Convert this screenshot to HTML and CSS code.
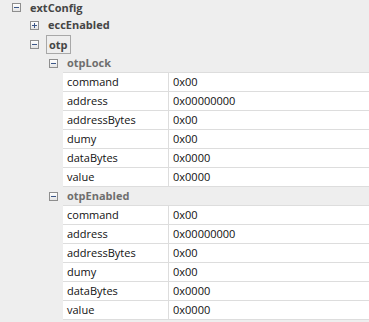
FILE: index.html
```html
<!DOCTYPE html>
<html lang="en">
  <head>
    <meta charset="UTF-8" />
    <title>extConfig</title>
    <link rel="stylesheet" href="styles.css">
  </head>

  <body>
    <div class="tree">
      <div class="node lvl0 first">
        <span class="toggle minus"></span>
        <span class="label">extConfig</span>
      </div>
      <div class="node lvl1">
        <span class="toggle plus"></span>
        <span class="label">eccEnabled</span>
      </div>
      <div class="node lvl1">
        <span class="toggle minus"></span>
        <span class="label focus">otp</span>
      </div>

      <div class="node lvl2 group">
        <span class="toggle minus"></span>
        <span class="label">otpLock</span>
      </div>
      <div class="props">
        <div class="row"><span class="name">command</span><span class="val">0x00</span></div>
        <div class="row"><span class="name">address</span><span class="val">0x00000000</span></div>
        <div class="row"><span class="name">addressBytes</span><span class="val">0x00</span></div>
        <div class="row"><span class="name">dumy</span><span class="val">0x00</span></div>
        <div class="row"><span class="name">dataBytes</span><span class="val">0x0000</span></div>
        <div class="row"><span class="name">value</span><span class="val">0x0000</span></div>
      </div>

      <div class="node lvl2 group">
        <span class="toggle minus"></span>
        <span class="label">otpEnabled</span>
      </div>
      <div class="props">
        <div class="row"><span class="name">command</span><span class="val">0x00</span></div>
        <div class="row"><span class="name">address</span><span class="val">0x00000000</span></div>
        <div class="row"><span class="name">addressBytes</span><span class="val">0x00</span></div>
        <div class="row"><span class="name">dumy</span><span class="val">0x00</span></div>
        <div class="row"><span class="name">dataBytes</span><span class="val">0x0000</span></div>
        <div class="row"><span class="name">value</span><span class="val">0x0000</span></div>
      </div>
    </div>
  </body>
</html>
```

FILE: styles.css
```css
body {
  margin: 0;
  background-color: #eeeeee;
  font-family: "Open Sans", "Noto Sans", sans-serif;
  font-size: 11px;
  overflow: hidden;
}

.node {
  display: flex;
  align-items: center;
  height: 18px;
  border-bottom: 1px solid transparent;
}
.first {
  height: 15px;
}
.lvl0 {
  padding-left: 12px;
}
.lvl1 {
  padding-left: 30px;
}
.lvl2 {
  padding-left: 49px;
}

.toggle {
  position: relative;
  box-sizing: border-box;
  width: 9px;
  height: 9px;
  margin-right: 9px;
  border: 1px solid #8e8e8e;
  background: linear-gradient(#ffffff, #e4e4e4);
}
.toggle::before,
.toggle::after {
  content: "";
  position: absolute;
  background-color: #3b5687;
}
.toggle::before {
  left: 1px;
  top: 3px;
  width: 5px;
  height: 1px;
}
.plus::after {
  left: 3px;
  top: 1px;
  width: 1px;
  height: 5px;
}

.label {
  font-weight: bold;
  color: #454545;
  line-height: 18px;
}
.first .label {
  line-height: 15px;
}
.focus {
  margin-left: -2px;
  padding: 0 2px;
  border: 1px solid #a8a8a8;
  line-height: 17px;
}

.group .label {
  color: #6e6e6e;
}
.group {
  border-bottom: none;
}

.props {
  margin-left: 63px;
  border-top: 1px solid #dddddd;
  background-color: #ffffff;
}
.row {
  display: grid;
  grid-template-columns: 106px 1fr;
  height: 18px;
  line-height: 18px;
  border-bottom: 1px solid #dddddd;
  color: #111111;
}
.name {
  padding-left: 4px;
  border-right: 1px solid #dddddd;
}
.val {
  padding-left: 4px;
}
```
